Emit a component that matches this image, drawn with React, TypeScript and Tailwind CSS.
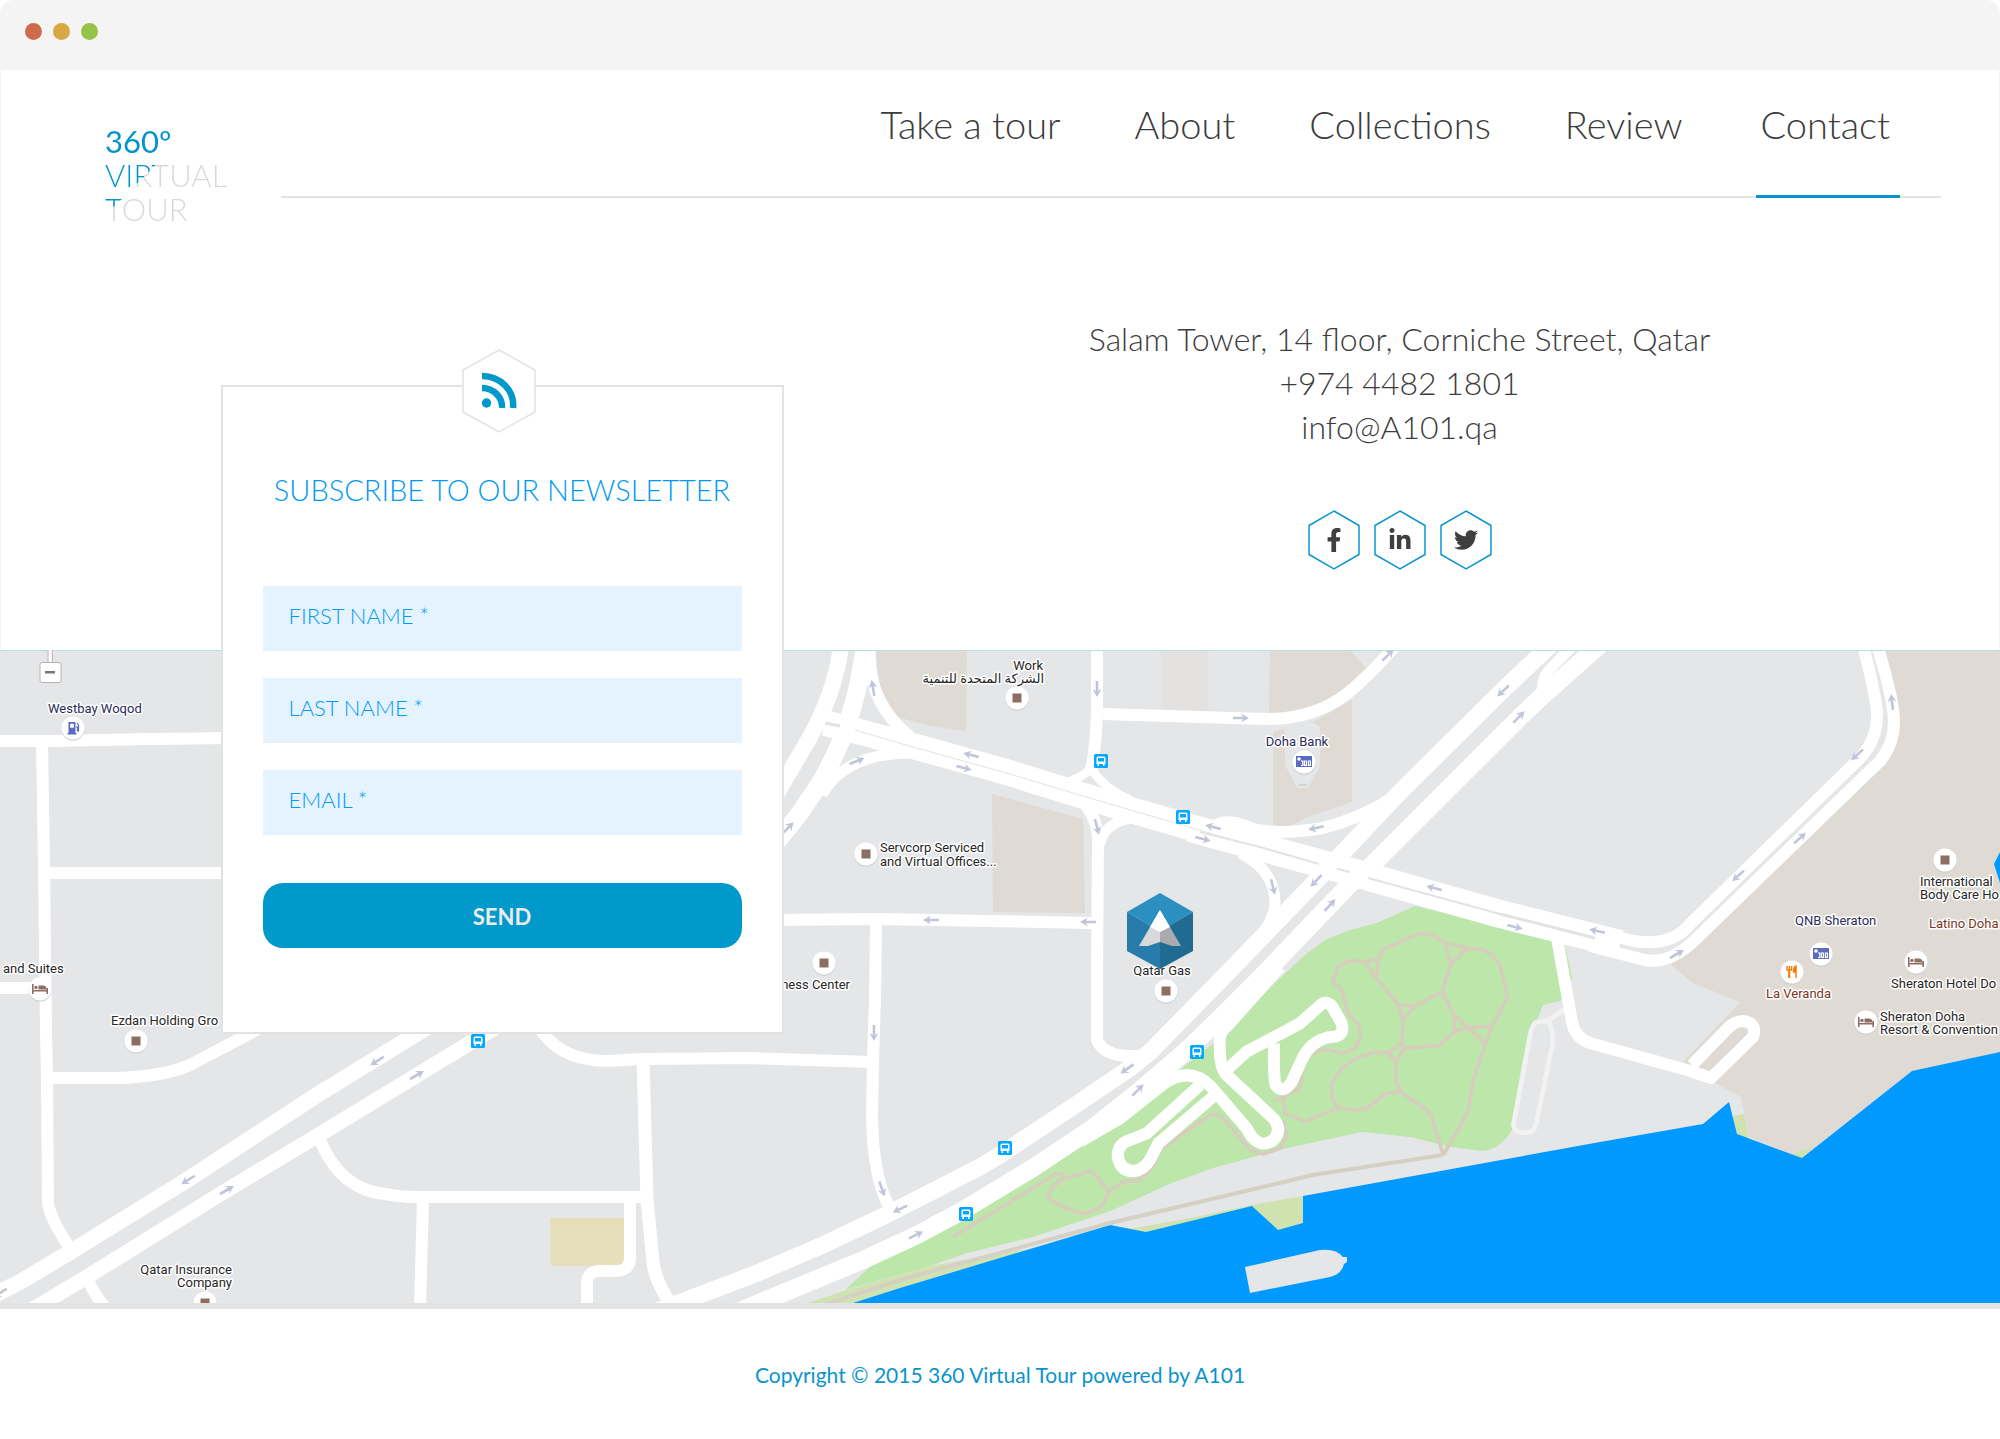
import React from "react";
import { FaFacebookF, FaLinkedinIn, FaTwitter } from "react-icons/fa";

const NAV = ["Take a tour", "About", "Collections", "Review", "Contact"];

const FIELDS = [
  { name: "firstName", label: "FIRST NAME *", type: "text" },
  { name: "lastName", label: "LAST NAME *", type: "text" },
  { name: "email", label: "EMAIL *", type: "email" },
];

const SOCIAL = [
  { name: "Facebook", Icon: FaFacebookF },
  { name: "LinkedIn", Icon: FaLinkedinIn },
  { name: "Twitter", Icon: FaTwitter },
];

/* Map roads: [stroke width, path] */
const ROADS: [number, string][] = [
  [12, "M0 741 H50 L150 739 L235 738"],
  [12, "M42 741 L44 867 L46 1030 L47 1078 L48 1204 Q52 1222 70 1248"],
  [12, "M44 873 H235"],
  [12, "M0 988 H45"],
  [12, "M46 1078 H115 Q165 1077 192 1064 L260 1028"],
  [16, "M-10 1297 L20 1282 L72 1251 L187 1180 L317 1095 L439 1020"],
  [15, "M30 1311 L90 1275 L227 1190 L317 1136 L506 1021"],
  [12, "M319 1138 Q340 1190 385 1194 Q400 1197 420 1197 H645"],
  [12, "M423 1198 L420 1310"],
  [12, "M88 1280 Q94 1294 104 1306"],
  [12, "M536 1022 Q556 1061 608 1061 L640 1059 L747 1058 L870 1062"],
  [12, "M876 920 L875 1000 L873 1060 L872 1117 Q873 1180 891 1210"],
  [13, "M643 1060 L647 1200 L653 1262 Q654 1278 670 1303"],
  [12, "M630 1200 V1258 Q630 1271 615 1271 H600 Q587 1271 587 1284 V1310"],
  [17, "M655 1312 L755 1274 L823 1245 L888 1214 L980 1167 L1000 1155 L1080 1102 L1130 1068 L1150 1052 L1240 960 L1316 881 L1400 792 L1503 690 L1560 636"],
  [18, "M735 1313 L863 1260 L915 1236 L960 1212 L1033 1168 L1090 1130 L1138 1092 L1187 1050 L1220 1018 L1262 976 L1350 884 L1370 867 L1520 717 L1540 698 L1612 634"],
  [11, "M1543 695 Q1540 678 1552 667 L1582 636"],
  [11, "M1240 853 Q1275 870 1275 903 Q1275 915 1262 935"],
  [26, "M825 723 L913 746 L1003 771 L1103 802 L1200 830"],
  [28, "M1190 828 L1260 847 L1337 868 L1500 914 L1620 944"],
  [12, "M1590 930 L1633 941 Q1672 947 1690 924 L1857 761 Q1877 742 1877 715 Q1877 700 1863 645"],
  [12, "M1590 946 L1645 960 Q1670 965 1697 938 L1880 761 Q1894 744 1894 722 Q1894 700 1877 645"],
  [12, "M1557 938 L1572 1022 Q1575 1038 1590 1043 L1687 1070 L1711 1078 L1753 1037 Q1758 1023 1743 1021 Q1735 1021 1728 1028 L1692 1065"],
  [12, "M1097 645 V712 Q1096 745 1091 772"],
  [9, "M1091 766 Q1086 778 1060 784"],
  [9, "M1092 770 Q1106 790 1130 800"],
  [12, "M1086 805 Q1098 822 1098 840 L1097 975 V1040 Q1104 1056 1130 1056 H1144"],
  [10, "M1100 845 Q1103 822 1135 818"],
  [12, "M1103 714 L1230 718 L1267 719 Q1315 719 1348 693 Q1370 675 1396 645"],
  [12, "M1210 829 Q1226 816 1250 828 Q1275 836 1323 828 Q1390 810 1420 772"],
  [12, "M770 920 L877 919 L1092 923"],
  [16, "M841 645 Q836 690 810 737 L768 809"],
  [18, "M865 645 Q855 725 820 783 L800 813 L768 853"],
  [12, "M870 645 Q865 700 910 737"],
  [11, "M822 795 Q845 752 915 753"],
];

/* Map traffic arrows: [x, y, heading in degrees] */
const ARROWS: [number, number, number][] = [
  [377, 1061, 148], [417, 1075, -30], [188, 1180, 148], [227, 1190, -30], [0, 1293, 148],
  [874, 1033, 90], [882, 1189, 70], [900, 1209, 155], [916, 1235, -25],
  [873, 688, -100], [857, 761, -22], [971, 755, 195], [964, 768, 15],
  [1097, 689, 90], [1097, 827, 75], [1213, 827, 195], [1203, 839, 15],
  [931, 920, 180], [1088, 922, 180], [788, 828, -45],
  [1241, 718, 0], [1388, 655, -45], [1503, 691, 137], [1519, 717, -45],
  [1316, 828, 168], [1273, 887, 76], [1316, 881, 133], [1330, 905, -47],
  [1434, 888, 195], [1515, 927, 15], [1597, 931, 192],
  [1892, 702, -97], [1857, 755, 138], [1800, 838, -42], [1738, 876, 138], [1677, 954, -30],
  [1127, 1069, 145], [1138, 1090, -45],
];

const BUSES: [number, number][] = [
  [478, 1041], [1101, 761], [1183, 817], [1197, 1052], [1005, 1148], [966, 1214],
];

type PinKind = "square" | "bed" | "gas" | "bank" | "food";

const PINS: [PinKind, number, number][] = [
  ["square", 136, 1041], ["square", 1017, 698], ["square", 866, 854], ["square", 824, 963],
  ["square", 1166, 991], ["square", 1945, 860], ["square", 205, 1303],
  ["bed", 40, 989], ["bed", 1916, 962], ["bed", 1866, 1022],
  ["gas", 73, 728], ["bank", 1304, 762], ["bank", 1821, 954], ["food", 1792, 972],
];

type Label = { x: number; y: number; text: string; color?: string; anchor?: "start" | "middle" | "end" };

const NAVY = "#2a2c5c";
const BROWN = "#7a3624";

const LABELS: Label[] = [
  { x: 48, y: 713, text: "Westbay Woqod", color: NAVY },
  { x: 3, y: 973, text: "and Suites" },
  { x: 111, y: 1025, text: "Ezdan Holding Gro" },
  { x: 232, y: 1274, text: "Qatar Insurance", anchor: "end" },
  { x: 232, y: 1287, text: "Company", anchor: "end" },
  { x: 1043, y: 670, text: "Work", anchor: "end" },
  { x: 1044, y: 683, text: "الشركة المتحدة للتنمية", anchor: "end" },
  { x: 880, y: 852, text: "Servcorp Serviced" },
  { x: 880, y: 866, text: "and Virtual Offices..." },
  { x: 850, y: 989, text: "ness Center", anchor: "end" },
  { x: 1297, y: 746, text: "Doha Bank", color: NAVY, anchor: "middle" },
  { x: 1162, y: 975, text: "Qatar Gas", anchor: "middle" },
  { x: 1920, y: 886, text: "International" },
  { x: 1920, y: 899, text: "Body Care Ho" },
  { x: 1929, y: 928, text: "Latino Doha", color: BROWN },
  { x: 1795, y: 925, text: "QNB Sheraton", color: NAVY },
  { x: 1766, y: 998, text: "La Veranda", color: BROWN },
  { x: 1891, y: 988, text: "Sheraton Hotel Do" },
  { x: 1880, y: 1021, text: "Sheraton Doha" },
  { x: 1880, y: 1034, text: "Resort & Convention" },
];

function PinGlyph({ kind }: { kind: PinKind }) {
  switch (kind) {
    case "square":
      return <rect x="-4.5" y="-4.5" width="9" height="9" fill="#8d6e63" />;
    case "bed":
      return (
        <g fill="#8d6e63">
          <path d="M-8 -5 h1.6 v6 h12.8 v-2 h1.6 v6 h-1.6 v-2.4 h-12.8 v2.4 h-1.6z" />
          <circle cx="-4" cy="-1.6" r="1.7" />
          <path d="M-1.5 0.4 v-3.8 h5 q3 .6 3 3.8z" />
        </g>
      );
    case "gas":
      return (
        <g fill="#5c6bc0">
          <path fillRule="evenodd" d="M-4.500 -6 h7 v11 h1 v1.500 h-9 v-1.500 h1z M-2.800 -4.300 v4 h3.600 v-4z" />
          <path d="M3 -1 h1.500 v4 h1 v-6 l-1.500 -2" fill="none" stroke="#5c6bc0" strokeWidth="1.200" />
        </g>
      );
    case "bank":
      return (
        <g>
          <rect x="-8" y="-6" width="16" height="11" fill="#5c6bc0" />
          <circle cx="-5" cy="-3" r="1.800" fill="#fff" />
          <g fill="none" stroke="#fff" strokeWidth="1.200">
            <path d="M-3 -1 h1.800 v4.500 M-3 3.500 h2 M0.400 -1 h2 v4.400 h-2z M4.400 -1 h2 v4.400 h-2z" />
          </g>
        </g>
      );
    case "food":
      return (
        <g fill="none" stroke="#f57c00" strokeWidth="1.400">
          <path d="M-5 -6 v4 h4.600 v-4 M-2.700 -6 v12" />
          <path d="M-2.700 -1 v7" strokeWidth="2" />
          <path d="M4 6 v-12 q-2.500 1 -2.500 6 h2" fill="#f57c00" />
        </g>
      );
  }
}

function CityMap() {
  return (
    <svg
      className="block h-[653px] w-full"
      viewBox="0 650 2000 653"
      preserveAspectRatio="xMidYMid slice"
      role="img"
      aria-label="Map of the Corniche, Doha"
    >
      <rect x="-2000" y="0" width="6000" height="2000" fill="#e5e6e8" />

      {/* land plots */}
      <g fill="#dfdbd4">
        <path d="M1885 645 L1897 722 L1880 761 L1697 938 L1671 965 L1693 983 L1740 1002 L1682 1063 L1718 1085 L1741 1097 L1749 1137 L1802 1158 L1912 1071 L2000 1052 V645z" />
        <path d="M876 650 H967 L966 731 L930 726 L897 717 L880 690z" />
        <path d="M992 794 L1083 819 L1085 913 L993 912z" />
        <path d="M1270 650 H1350 L1366 668 L1333 700 L1300 712 L1269 713z" />
        <path d="M1273 732 L1313 722 L1352 700 V802 L1307 817 L1273 836z" />
      </g>
      <path d="M1161 650 H1208 V712 L1161 709z" fill="#e3e2e1" />
      <path d="M1285 727 L1300 722 L1315 723 L1320 727 V767 L1308 788 H1297 L1285 765z" fill="#e5e6e8" />
      <path d="M1299 785 h8" stroke="#d8d5cf" strokeWidth="2" />
      <path d="M550 1218 H626 V1266 H551z" fill="#e7dfba" />

      {/* park */}
      <path
        d="M845 1290 L872 1265 L980 1207 L1083 1145 L1123 1118 L1167 1080 L1215 1042 L1278 980 L1305 955 L1325 940 L1350 930 L1377 923 L1415 906 L1552 938 L1565 945 L1572 977 L1563 1000 L1543 1005 L1537 1020 L1512 1130 Q1500 1150 1482 1151 L1450 1147 L1410 1137 L1362 1132 L1287 1148 L1213 1168 L1167 1185 L1113 1210 L1033 1237 L967 1253 L930 1266z"
        fill="#bce6aa"
      />
      <g fill="#d0e2b0">
        <path d="M808 1303 L847 1290 L930 1266 L1033 1248 L900 1288 L853 1303z" />
        <path d="M1130 1229 L1190 1218 L1252 1205 L1303 1196 V1224 L1278 1231 L1252 1208 L1147 1234z" />
        <path d="M1733 1116 L1744 1114 L1749 1138 L1737 1136z" />
        <path d="M1792 1154 L1813 1147 L1802 1159z" />
      </g>

      {/* sea */}
      <path
        d="M2000 1052 L1912 1071 L1802 1158 L1737 1134 L1729 1102 L1703 1124 L1600 1142 L1303 1196 V1223 L1278 1230 L1252 1206 L1146 1232 L1110 1225 L900 1288 L853 1303 V1310 H4000 V1052z"
        fill="#0099ff"
      />
      <path d="M2000 852 L1994 864 L2000 883z" fill="#0099ff" />
      <path d="M1245 1267 L1320 1250 Q1336 1248 1343 1257 L1347 1257 V1262 L1344 1264 Q1342 1274 1330 1277 L1250 1293z" fill="#e5e6e8" />

      {/* promenade */}
      <path d="M820 1306 L900 1280 L1110 1223 L1250 1190 L1313 1175 L1443 1155" fill="none" stroke="#d5d0c4" strokeWidth="4" />

      {/* footpaths */}
      <g transform="translate(1250 880) scale(.33333)" fill="none" stroke="#d6cdbd" strokeWidth="11" strokeLinejoin="round">
        <path d="M580 825 L545 710 L530 690 L455 640 L437 600 V545 L465 505 L565 497 L615 455 L650 443 L725 440 L773 350 L750 255 L725 222 L690 207 L650 205 L605 250 L590 290 L577 335 L500 375 L460 415 L455 490 L465 505" />
        <path d="M580 825 L635 730 L655 690 L670 600 L707 490 L725 440" />
        <path d="M577 335 L612 405 L650 440 L707 490 M612 405 L613 455" />
        <path d="M650 205 L585 188 L550 165 L515 160 L480 172 L400 208 L385 238 L380 295 L445 375 L455 415 M445 375 L500 377 M585 188 L603 250" />
        <path d="M385 238 L345 245 L300 242 L265 260 L248 305 L278 335 L295 405 L325 430 L332 470 L315 505 L280 520 L225 508 L175 525 L158 560 L150 625 L100 650 L105 700 L165 725 L265 683 L310 690 L350 685 L410 640 L455 635 M345 245 L380 295" />
        <path d="M265 683 L245 655 V610 L275 565 L320 535 L370 517 L415 518 L455 490 M415 518 L437 545 M100 650 L70 665" />
      </g>
      <g transform="translate(900 960) scale(.33333)" fill="none" stroke="#d6cdbd" strokeWidth="11" strokeLinejoin="round">
        <path d="M160 830 L470 640 L485 640 L490 655" />
        <path d="M445 700 L480 660 L575 632 L628 695 L600 745 L550 762 L500 745 L445 715z" />
        <path d="M628 695 L670 665 L720 660 L760 620 L780 570 L930 465 L950 462 L980 485 L1050 570 L1090 582 L1140 565 L1160 530 L1150 480" />
      </g>

      {/* parking loop */}
      <g transform="translate(1250 880) scale(.33333)" stroke="#f2f2f2" strokeWidth="14" strokeLinejoin="round">
        <path d="M870 425 L855 428 L843 450 L790 735 Q792 757 820 758 Q852 760 858 735 L908 490 Q910 450 895 422z" fill="#e5e6e8" />
        <path d="M895 420 L945 388" fill="none" />
      </g>

      {/* roads */}
      <g fill="none" stroke="#fff" strokeLinejoin="round">
        {ROADS.map(([width, d]) => (
          <path key={d} d={d} strokeWidth={width} />
        ))}
      </g>
      <g transform="translate(900 960) scale(.33333)" fill="none" stroke="#fff" strokeWidth="36" strokeLinejoin="round">
        <path d="M540 545 L660 475 L790 372 Q870 315 935 382 L1040 505 L1055 530 Q1085 565 1120 540 Q1148 510 1120 475 L980 345 Q955 320 960 230 Q965 210 985 195 L1140 20" />
        <path d="M985 325 L1040 275 L1200 190 L1265 132 Q1285 120 1300 145 L1325 190 Q1335 228 1300 230 Q1240 235 1210 290 L1175 365 Q1150 405 1127 375 Q1120 350 1122 250" />
        <path d="M900 375 L740 520 L690 540 Q655 550 653 585 Q658 632 700 634 Q735 630 755 590 L775 550 L945 405" />
        <path d="M1060 110 L1145 -10" />
      </g>

      {/* medians */}
      <g fill="none" stroke="#e3e3e3">
        <path d="M825 723 L840 726" strokeWidth="3" />
        <path d="M855 730 L913 747 L1003 772 L1103 802 L1230 839" strokeWidth="1" />
        <path d="M1200 832 L1260 847 L1319 864 M1337 869 L1350 872 M1368 878 L1500 914" strokeWidth="2" />
        <path d="M1500 914 L1595 938" strokeWidth="3" />
      </g>
      <g fill="#e5e6e8">
        <path d="M1081 781 L1088 777 L1093 784z" />
        <path d="M1099 814 L1108 817 L1101 821z" />
        <path d="M850 743 L872 748 Q855 752 843 762z" />
      </g>

      <path d="M0 650.500 H2000" stroke="#b9dde8" strokeWidth="1" />

      <g fill="#c1c5da">
        {ARROWS.map(([x, y, a]) => (
          <path
            key={`${x}-${y}`}
            transform={`translate(${x} ${y}) rotate(${a})`}
            d="M-8 -1.300 H2 L0 -4.500 L8 0 L0 4.500 L2 1.300 H-8z"
          />
        ))}
      </g>

      {BUSES.map(([x, y]) => (
        <g key={`${x}-${y}`} transform={`translate(${x} ${y})`}>
          <rect x="-7" y="-7" width="14" height="14" rx="1.500" fill="#00a8ff" />
          <path fillRule="evenodd" fill="#fff" d="M-4.500 -3 Q-4.500 -4.500 -3 -4.500 H3 Q4.500 -4.500 4.500 -3 V3 H3.500 V5 H2 V3 H-2 V5 H-3.500 V3 H-4.500z M-3 -3 V0.500 H3 V-3z" />
        </g>
      ))}

      {/* zoom-out control */}
      <path d="M50 650 V663" stroke="#fff" strokeWidth="3" />
      <path d="M48 650 V663 M52.500 650 V663" stroke="#bdbdbd" strokeWidth="1" />
      <rect x="40" y="662.500" width="21" height="20" rx="2" fill="#fff" stroke="#b5b5b5" />
      <rect x="45" y="671" width="10" height="2.500" fill="#777" />

      {PINS.map(([kind, x, y]) => (
        <g key={`${x}-${y}`} transform={`translate(${x} ${y})`}>
          <circle cy="1" r="11.500" fill="#c9c9cd" />
          <circle r="11.500" fill="#fff" />
          <PinGlyph kind={kind} />
        </g>
      ))}

      <g
        className="font-[Roboto,'DejaVu_Sans',sans-serif] text-[13px]"
        stroke="#fff"
        strokeWidth="3"
        strokeLinejoin="round"
        paintOrder="stroke"
      >
        {LABELS.map(({ x, y, text, color = "#262626", anchor = "start" }) => (
          <text key={text} x={x} y={y} fill={color} textAnchor={anchor}>
            {text}
          </text>
        ))}
      </g>

      {/* office marker */}
      <g transform="translate(1160 931)">
        <path d="M0 -38 L33 -19 L0 0 L-33 -19z" fill="#2b8fc2" />
        <path d="M-33 -19 L0 0 V38 L-33 20z" fill="#277cab" />
        <path d="M33 -19 L0 0 V38 L33 20z" fill="#1f6b92" />
        <path d="M0 -21 L-21 15 L-12 15 L0 11z" fill="#d9d9db" />
        <path d="M0 -21 L21 15 L12 15 L0 11z" fill="#a9abaf" />
        <path d="M0 -21 L-10 -4 L0 1 L10 -4z" fill="#fff" />
      </g>
    </svg>
  );
}

function NewsletterCard() {
  return (
    <form
      className="relative z-10 mt-[186px] -mb-[384px] w-[563px] border-2 border-[#e2e2e3] bg-white px-10 pt-[83px] pb-[84px]"
      onSubmit={(e) => e.preventDefault()}
    >
      <svg className="absolute -top-[38px] left-[239px] h-[84px] w-[74px]" viewBox="0 0 74 84" aria-hidden="true">
        <path d="M37 1 L73 21 V63 L37 83 L1 63 V21z" fill="#fff" stroke="#e2e2e2" strokeWidth="1.500" />
        <g fill="none" stroke="#0099cc" strokeWidth="6.500">
          <path d="M20 27 A31 29 0 0 1 51 59" />
          <path d="M20 39 A20 19 0 0 1 40 59" />
        </g>
        <circle cx="24.500" cy="54" r="4.700" fill="#0099cc" />
      </svg>
      <h2 className="text-center text-[29px] leading-10 font-light whitespace-nowrap text-[#0099f5]">
        SUBSCRIBE TO OUR NEWSLETTER
      </h2>
      <div className="mt-[76px] flex flex-col gap-[27px]">
        {FIELDS.map((f) => (
          <input
            key={f.name}
            name={f.name}
            type={f.type}
            aria-label={f.label}
            placeholder={f.label}
            className="h-[65px] w-full bg-[#e5f3ff] px-[26px] pb-1.5 text-[22px] font-light text-[#0099f5] outline-none placeholder:text-[#0099f5]"
          />
        ))}
      </div>
      <button
        type="submit"
        className="mt-12 h-[65px] w-full rounded-[20px] bg-[#0099cc] pt-0.5 text-[22px] font-bold text-[#ececec]"
      >
        SEND
      </button>
    </form>
  );
}

export default function App() {
  return (
    <div className="min-h-screen w-full bg-white font-[Lato,sans-serif] text-[#3c3c3c]">
      <div className="flex h-[70px] items-center gap-[11px] rounded-t-[14px] bg-[#f4f4f4] px-[25px] pb-2">
        <span className="size-[17px] rounded-full bg-[#cf6b4d]" />
        <span className="size-[17px] rounded-full bg-[#d7a741]" />
        <span className="size-[17px] rounded-full bg-[#96c346]" />
      </div>

      <div className="border-x border-[#f4f4f4]">
        <header className="flex h-[129px] items-start pr-[58px] pl-[104px]">
          <a
            href="#home"
            className="mt-[54px] w-[176px] bg-[linear-gradient(135deg,#0093cc_65px,#d9d9d9_65px)] bg-clip-text text-[31px] leading-[34px] font-light text-transparent"
          >
            <span className="block font-normal">360º</span>
            <span className="block">VIRTUAL</span>
            <span className="block">TOUR</span>
          </a>
          <nav className="flex h-[128px] flex-1 justify-end gap-[74px] border-b-2 border-[#e3e3e3] pr-[41px]">
            {NAV.map((item) => (
              <a
                key={item}
                href={`#${item.toLowerCase().replace(/ /g, "-")}`}
                aria-current={item === "Contact" ? "page" : undefined}
                className="-mb-0.5 pt-7 text-[38px] leading-[52px] font-light whitespace-nowrap aria-[current=page]:border-b-3 aria-[current=page]:border-[#0a93cc] aria-[current=page]:pr-2.5 aria-[current=page]:pl-1"
              >
                {item}
              </a>
            ))}
          </nav>
        </header>

        <section className="grid grid-cols-2">
          <div className="flex justify-center pl-[3px]">
            <NewsletterCard />
          </div>
          <div className="flex flex-col items-center pt-[118px] pr-[10vw]">
            <address className="text-center text-[32px] leading-[44px] font-light whitespace-nowrap not-italic">
              Salam Tower, 14 floor, Corniche Street, Qatar
              <br />
              +974 4482 1801
              <br />
              info@A101.qa
            </address>
            <div className="mt-[61px] flex gap-3.5">
              {SOCIAL.map(({ name, Icon }) => (
                <a key={name} href={`#${name.toLowerCase()}`} aria-label={name} className="grid h-[60px] w-[52px] place-items-center">
                  <svg className="col-start-1 row-start-1 h-full w-full" viewBox="0 0 52 60" aria-hidden="true">
                    <path d="M26 1 L51 15.500 V44.500 L26 59 L1 44.500 V15.500z" fill="none" stroke="#0c96d0" strokeWidth="1.500" />
                  </svg>
                  <Icon className="col-start-1 row-start-1 size-6 text-[#3f3f3f]" />
                </a>
              ))}
            </div>
          </div>
        </section>
      </div>

      <CityMap />

      <footer className="border-t-6 border-[#e3e3e3] pt-[50px] pb-12 text-center text-[21px] leading-8 text-[#0b93cc]">
        Copyright © 2015 360 Virtual Tour powered by A101
      </footer>
    </div>
  );
}
